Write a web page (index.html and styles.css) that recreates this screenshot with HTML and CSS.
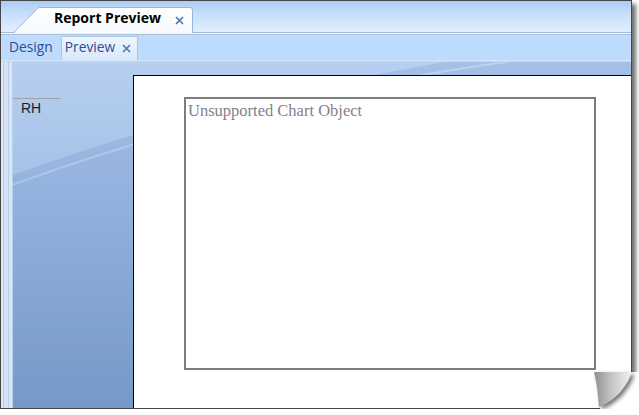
FILE: index.html
```html
<!DOCTYPE html>
<html>
<head>
<meta charset="utf-8">
<link rel="stylesheet" href="styles.css">
</head>
<body>
<div class="window">
  <div class="doc-tabs">
    <div class="doc-tab">
      <svg class="doc-tab-shape" width="180" height="26" viewBox="0 0 180 26">
        <defs>
          <linearGradient id="tabfill" x1="0" y1="0" x2="0" y2="1">
            <stop offset="0" stop-color="#ffffff"/>
            <stop offset="1" stop-color="#f6f9fe"/>
          </linearGradient>
        </defs>
        <path d="M0.5 26 L24.5 1.5 Q25.5 0.5 27 0.5 L177 0.5 Q179.5 0.5 179.5 3 L179.5 26" fill="url(#tabfill)" stroke="#98b6dc" stroke-width="1"/>
      </svg>
      <span class="doc-tab-label">Report Preview</span>
      <svg class="x-icon doc-x" width="9" height="9" viewBox="0 0 9 9"><path d="M1 1 L8 8 M8 1 L1 8" stroke="#4f70aa" stroke-width="1.6"/></svg>
    </div>
  </div>
  <div class="sep"></div>
  <div class="view-tabs">
    <span class="view-tab">Design</span>
    <span class="view-tab active">Preview<svg class="x-icon" width="9" height="9" viewBox="0 0 9 9"><path d="M1 1 L8 8 M8 1 L1 8" stroke="#4f70aa" stroke-width="1.5"/></svg></span>
  </div>
  <div class="view-sep"></div>
  <div class="content">
    <div class="rails"></div>
    <div class="canvas">
      <div class="bands">
        <div class="band-line"></div>
        <span class="band-label">RH</span>
      </div>
      <div class="page">
        <div class="chart">Unsupported Chart Object</div>
      </div>
    </div>
  </div>
  <svg class="curl" width="49" height="50" viewBox="0 0 49 50">
    <defs>
      <linearGradient id="curlfill" x1="0" y1="0" x2="1" y2="0">
        <stop offset="0" stop-color="#8e8e8e"/>
        <stop offset="0.45" stop-color="#c4c4c4"/>
        <stop offset="1" stop-color="#f2f2f2"/>
      </linearGradient>
      <filter id="blur" x="-50%" y="-50%" width="200%" height="200%"><feGaussianBlur stdDeviation="2"/></filter>
    </defs>
    <path d="M42 7 L49 7 L49 50 L10 50 L10 43 Z" fill="#ffffff"/>
    <path d="M4 7 L42 7 C37 22 25 36 9 42 C8 30 7 18 4 7 Z" fill="#000" opacity="0.55" filter="url(#blur)" transform="translate(2.5 2.5)"/>
    <path d="M4 7 L42 7 C37 22 25 36 9 42 C8 30 7 18 4 7 Z" fill="url(#curlfill)"/>
  </svg>
</div>
</body>
</html>
```
FILE: styles.css
```css
html, body {
  margin: 0;
  padding: 0;
  background: #ffffff;
}

body {
  font-family: "Open Sans", "Liberation Sans", sans-serif;
}

.window {
  position: relative;
  width: 630px;
  height: 407px;
  border: 1px solid #464646;
  box-shadow: 4px 4px 4px rgba(0, 0, 0, 0.55);
  display: flex;
  flex-direction: column;
  overflow: visible;
  background: #ffffff;
}

.doc-tabs {
  height: 31px;
  flex: none;
  display: flex;
  align-items: flex-end;
  background: linear-gradient(#a9ccf5, #c6def9 40%, #e2efff);
}

.doc-tab {
  position: relative;
  width: 180px;
  height: 25px;
  margin-left: 12px;
  display: flex;
  align-items: flex-start;
}

.doc-tab-shape {
  position: absolute;
  left: 0;
  top: 0;
}

.doc-tab-label {
  position: relative;
  margin-left: 41px;
  padding-top: 1px;
  font-size: 14px;
  line-height: 19px;
  font-weight: 700;
  color: #000000;
}

.x-icon {
  display: block;
  flex: none;
}

.doc-x {
  position: relative;
  margin-left: 14px;
  margin-top: 9px;
}

.sep {
  height: 3px;
  flex: none;
  background: linear-gradient(#a7bcd8 0 1px, #eef5fe 1px 2px, #aebfd8 2px 3px);
}

.view-tabs {
  height: 25px;
  flex: none;
  display: flex;
  align-items: flex-end;
  background: #bddbfc;
  padding-left: 8px;
  gap: 8px;
}

.view-tab {
  font-size: 13.8px;
  line-height: 18px;
  color: #2e4d92;
  height: 24px;
  box-sizing: border-box;
  padding: 2px 0 0 0;
  display: flex;
  align-items: flex-start;
  white-space: nowrap;
}

.view-tab.active {
  padding: 1px 6px 0 3px;
  border: 1px solid #a6c4ea;
  border-bottom: none;
  border-radius: 2px 2px 0 0;
  background: linear-gradient(#eef5ff, #d9e8fb);
  gap: 7px;
}

.view-tab.active .x-icon {
  margin-top: 6px;
}

.view-sep {
  height: 2px;
  flex: none;
  background: linear-gradient(#d3e5f9 0 1px, #c3d7ef 1px 2px);
}

.content {
  flex: 1;
  display: flex;
  min-height: 0;
}

.rails {
  width: 12px;
  flex: none;
  background: linear-gradient(90deg,
    #dae8f7 0 2px,
    #b5cbe7 2px 3px,
    #d4e4f6 3px 7px,
    #b9cee9 7px 8px,
    #d6e6f7 8px 11px,
    #bcd0ea 11px 12px);
}

.canvas {
  flex: 1;
  display: flex;
  min-width: 0;
  background:
    radial-gradient(circle 2433px at 829px 2400px,
      rgba(30, 70, 150, 0.10) 2422px,
      rgba(255, 255, 255, 0.10) 2423px,
      rgba(255, 255, 255, 0.10) 2424px,
      rgba(30, 70, 150, 0.10) 2425px,
      rgba(30, 70, 150, 0.10) 2432px,
      rgba(255, 255, 255, 0.03) 2433px),
    linear-gradient(#b4cef0, #9dbbe3 45%, #80a2cd);
}

.bands {
  width: 120px;
  flex: none;
  padding-top: 36px;
}

.band-line {
  width: 47px;
  height: 1px;
  background: #a39f9f;
}

.band-label {
  display: block;
  margin-top: 1px;
  padding-left: 8px;
  font-family: "Liberation Sans", Arial, sans-serif;
  font-size: 14px;
  line-height: 16px;
  color: #1b1b28;
}

.page {
  flex: 1;
  margin-top: 13px;
  background: #ffffff;
  border-top: 1px solid #000000;
  border-left: 1px solid #000000;
  padding-left: 50px;
  padding-top: 21px;
}

.chart {
  width: 412px;
  height: 273px;
  box-sizing: border-box;
  border: 2px solid #7d7d7d;
  padding-left: 2px;
  padding-top: 2px;
  font-family: "Liberation Serif", "Times New Roman", serif;
  font-size: 16.5px;
  line-height: 19px;
  color: #857f87;
}

.curl {
  position: absolute;
  right: -8px;
  bottom: -7px;
}
```
